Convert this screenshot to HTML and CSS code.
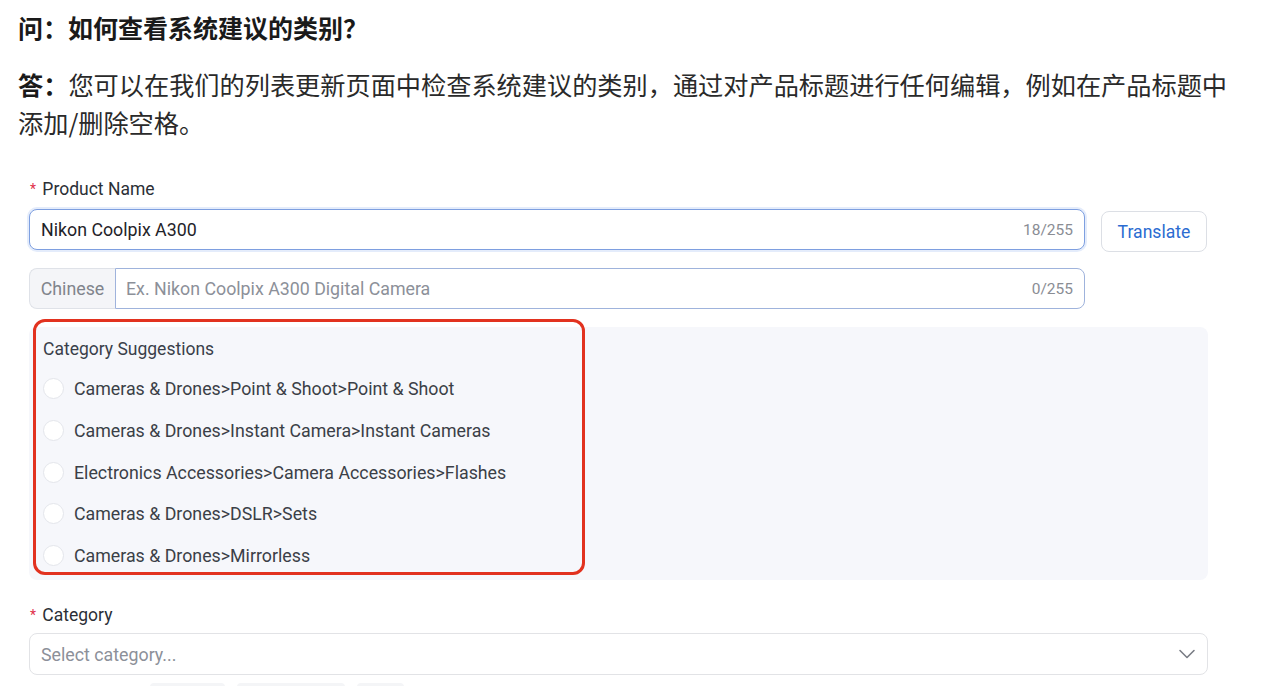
FILE: index.html
```html
<!DOCTYPE html>
<html lang="zh">
<head>
<meta charset="utf-8">
<link rel="stylesheet" href="styles.css">
</head>
<body>
<div class="page">
  <h2 class="q">问：如何查看系统建议的类别？</h2>
  <p class="a"><b>答：</b>您可以在我们的列表更新页面中检查系统建议的类别，通过对产品标题进行任何编辑，例如在产品标题中添加/删除空格。</p>

  <div class="form">
    <div class="label"><span class="req">*</span> Product Name</div>
    <div class="row">
      <div class="input focus">
        <span class="val">Nikon Coolpix A300</span>
        <span class="count">18/255</span>
      </div>
      <button class="btn">Translate</button>
    </div>
    <div class="row2">
      <div class="group">
        <span class="addon">Chinese</span>
        <div class="input inner">
          <span class="ph">Ex. Nikon Coolpix A300 Digital Camera</span>
          <span class="count">0/255</span>
        </div>
      </div>
    </div>

    <div class="sugg">
      <div class="mark"></div>
      <div class="sugg-title">Category Suggestions</div>
      <div class="opt"><span class="radio"></span>Cameras &amp; Drones&gt;Point &amp; Shoot&gt;Point &amp; Shoot</div>
      <div class="opt"><span class="radio"></span>Cameras &amp; Drones&gt;Instant Camera&gt;Instant Cameras</div>
      <div class="opt"><span class="radio"></span>Electronics Accessories&gt;Camera Accessories&gt;Flashes</div>
      <div class="opt"><span class="radio"></span>Cameras &amp; Drones&gt;DSLR&gt;Sets</div>
      <div class="opt"><span class="radio"></span>Cameras &amp; Drones&gt;Mirrorless</div>
    </div>

    <div class="label cat"><span class="req">*</span> Category</div>
    <div class="select">
      <span class="ph">Select category...</span>
      <svg class="chev" width="20" height="20" viewBox="0 0 20 20"><path d="M3 6.5 L10 13.5 L17 6.5" fill="none" stroke="#7a7d85" stroke-width="1.6" stroke-linecap="round" stroke-linejoin="round"/></svg>
    </div>
    <div class="chips">
      <span class="chip c1"></span><span class="chip c2"></span><span class="chip c3"></span>
    </div>
  </div>
</div>
</body>
</html>
```
FILE: styles.css
```css
html, body { margin: 0; padding: 0; background: #fff; overflow: hidden; }
.page {
  padding-left: 18px;
  width: 1230px;
  font-family: Roboto, "Noto Sans CJK SC", sans-serif;
  color: #1f1f1f;
}
.q {
  margin: 9px 0 0;
  font-family: "Noto Sans CJK SC", sans-serif;
  font-size: 25px;
  line-height: 36px;
  font-weight: 700;
  color: #1a1a1a;
}
.a {
  margin: 20px 0 0;
  font-family: "Noto Sans CJK SC", sans-serif;
  font-size: 25.2px;
  line-height: 38px;
  color: #2a2a2a;
}
.a b { display: inline-block; font-weight: 700; color: #1a1a1a; }
.form { margin-left: 11px; width: 1179px; padding-top: 37px; }
.label { font-size: 17.5px; line-height: 22px; color: #2b2f36; padding-left: 1px; }
.req { color: #e0304a; font-size: 14px; vertical-align: top; margin-right: 2px; }
.row { display: flex; align-items: flex-start; gap: 16px; margin-top: 9px; }
.input {
  box-sizing: border-box;
  height: 41px;
  display: flex;
  align-items: center;
  justify-content: space-between;
  padding: 0 11px;
  border: 1px solid #9db3df;
  border-radius: 8px;
  background: #fff;
  font-size: 17.8px;
}
.input.focus {
  width: 1056px;
  border-color: #7e9fe0;
  box-shadow: 0 0 0 2px #e4ecfb;
}
.val { color: #1f2329; }
.count { font-size: 15.5px; color: #8a8d94; }
.ph { color: #8c9099; font-size: 17.8px; }
.btn {
  margin-top: 2px;
  box-sizing: border-box;
  width: 106px;
  height: 41px;
  border: 1px solid #dcdfe5;
  border-radius: 8px;
  background: #fff;
  color: #2b6cd1;
  font-family: Roboto, sans-serif;
  font-size: 17.6px;
}
.row2 { margin-top: 16px; }
.group { display: flex; width: 1056px; }
.addon {
  box-sizing: border-box;
  width: 86px;
  height: 41px;
  display: flex;
  align-items: center;
  justify-content: center;
  background: #f4f5f8;
  border: 1px solid #dfe2e8;
  border-right: none;
  border-radius: 8px 0 0 8px;
  color: #80848c;
  font-size: 17.8px;
}
.input.inner {
  flex: 1;
  border-radius: 0 8px 8px 0;
  border-color: #9fb3dc;
  padding-left: 10px;
}
.sugg {
  position: relative;
  margin-top: 18px;
  height: 253px;
  box-sizing: border-box;
  background: #f6f7fb;
  border-radius: 8px;
  padding: 11px 14px 0;
}
.mark {
  position: absolute;
  left: 4px;
  top: -8px;
  width: 552px;
  height: 256px;
  box-sizing: border-box;
  border: 3px solid #e2321f;
  border-radius: 12px;
}
.sugg-title { font-size: 17.5px; line-height: 22px; color: #3a3f4a; }
.opt {
  display: flex;
  align-items: center;
  height: 41.7px;
  font-size: 17.8px;
  color: #3b3f47;
}
.sugg-title + .opt { margin-top: 8px; }
.radio {
  box-sizing: border-box;
  width: 21px;
  height: 21px;
  border-radius: 50%;
  background: #fff;
  border: 1px solid #e4e6eb;
  margin-right: 10px;
}
.cat { margin-top: 24px; }
.select {
  box-sizing: border-box;
  margin-top: 7px;
  height: 42px;
  display: flex;
  align-items: center;
  justify-content: space-between;
  padding: 0 11px;
  border: 1px solid #e2e3e6;
  border-radius: 8px;
}
.chev { margin-right: -1px; }
.chips { display: flex; gap: 12px; margin-top: 8px; padding-left: 121px; }
.chip { height: 12px; background: #f4f5f7; border-radius: 4px; }
.c1 { width: 75px; }
.c2 { width: 108px; }
.c3 { width: 47px; }
```
